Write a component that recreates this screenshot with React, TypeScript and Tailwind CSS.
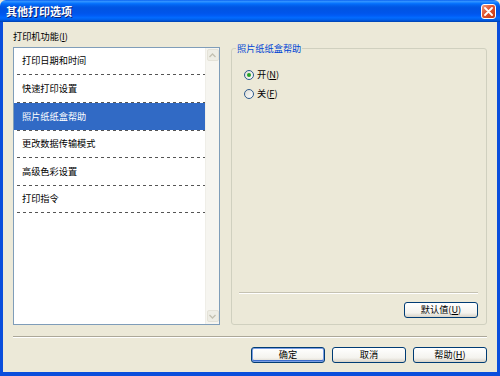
import React from 'react';

const items = [
  { label: '打印日期和时间', h: 'h-[26px]' },
  { label: '快速打印设置', h: 'h-[27px]' },
  { label: '照片纸纸盒帮助', h: 'h-[27px]', selected: true },
  { label: '更改数据传输模式', h: 'h-[26px]' },
  { label: '高级色彩设置', h: 'h-[27px]' },
  { label: '打印指令', h: 'h-[26px]' },
];

function XpButton({ children, primary = false }: { children: React.ReactNode; primary?: boolean }) {
  return (
    <button
      className={`w-[74px] h-[16px] rounded-[3px] border border-[#003C74] bg-[linear-gradient(180deg,#FFFFFF_0%,#F4F3EE_70%,#D8D3C8_100%)] text-[9.2px] leading-none text-black flex items-center justify-center ${
        primary ? 'shadow-[inset_0_0_0_1px_#7B9EE3,inset_0_-1px_0_1px_#3D6DCC]' : ''
      }`}
    >
      {children}
    </button>
  );
}

function Radio({ checked, children }: { checked?: boolean; children: React.ReactNode }) {
  return (
    <div className="flex items-center h-[13px] gap-[3px]">
      <div className="w-[10px] h-[10px] rounded-full border border-[#2C5A8E] bg-[linear-gradient(135deg,#DCDBD3,#FFFFFF)] flex items-center justify-center">
        {checked && <div className="w-[4px] h-[4px] rounded-full bg-[#25A325]" />}
      </div>
      <span className="text-[9.2px] leading-none">{children}</span>
    </div>
  );
}

function ScrollArrow({ up }: { up?: boolean }) {
  return (
    <div className="w-[12px] h-[12px] rounded-[2px] border border-[#E4E2D8] bg-[#EEEDE5] flex items-center justify-center">
      <svg width="7" height="5" viewBox="0 0 7 5">
        <path
          d={up ? 'M0.5 4 L3.5 1 L6.5 4' : 'M0.5 1 L3.5 4 L6.5 1'}
          fill="none"
          stroke="#C4C1B2"
          strokeWidth="1.4"
        />
      </svg>
    </div>
  );
}

export default function App() {
  return (
    <div className="w-[500px] h-[376px] flex flex-col bg-[#ECE9D8] font-['Noto_Sans_CJK_SC',sans-serif] text-black select-none overflow-hidden">
      {/* title bar */}
      <div className="h-[22px] shrink-0 rounded-t-[6px] flex items-center pl-[6px] pr-[4px] bg-[linear-gradient(180deg,#0058EE_0%,#3593FF_5%,#288EFF_9%,#127DFF_13%,#036FFC_17%,#0262EE_24%,#0057E5_32%,#0054E3_40%,#0055EB_60%,#005BF5_70%,#026AFE_80%,#0062EF_88%,#0052D6_94%,#0040AB_100%)]">
        <span className="flex-1 text-[11px] font-bold leading-none text-white [text-shadow:1px_1px_0_#0A1E6E]">
          其他打印选项
        </span>
        <div className="w-[15px] h-[15px] rounded-[3px] border border-white bg-[linear-gradient(135deg,#F09C80,#E0532F_45%,#C23A16)] flex items-center justify-center">
          <svg width="9" height="9" viewBox="0 0 9 9">
            <path d="M1 1 L8 8 M8 1 L1 8" stroke="white" strokeWidth="1.8" strokeLinecap="round" />
          </svg>
        </div>
      </div>

      {/* body */}
      <div className="flex-1 flex flex-col border-x-[3px] border-b-[4px] border-[#0A4EDC] px-[10px] pt-[8px]">
        <div className="text-[9.2px] leading-[12px]">
          打印机功能(<u>I</u>)
        </div>

        <div className="mt-[5px] flex items-start gap-[11px]">
          {/* list box */}
          <div className="w-[207px] h-[278px] border border-[#7F9DB9] bg-white flex">
            <div className="flex-1 flex flex-col">
              {items.map((it) => (
                <React.Fragment key={it.label}>
                  <div
                    className={`${it.h} flex items-center pl-[8px] text-[9.2px] leading-none ${
                      it.selected ? 'bg-[#316AC5] text-white' : 'text-black'
                    }`}
                  >
                    {it.label}
                  </div>
                  <div className="h-[1px] ml-[3px] bg-[linear-gradient(90deg,#555555_50%,transparent_50%)] bg-[length:6px_1px]" />
                </React.Fragment>
              ))}
            </div>
            <div className="w-[14px] border-l border-[#EFEEE8] bg-[#F6F5F0] flex flex-col justify-between items-center pt-[1px] pb-[2px]">
              <ScrollArrow up />
              <ScrollArrow />
            </div>
          </div>

          {/* group box */}
          <div className="relative mt-[1px] w-[256px] h-[277px] rounded-[3px] border border-[#D0D0BF] flex flex-col pt-[19px] pl-[12px] pb-[6px]">
            <span className="absolute top-[-7px] left-[4px] px-[1px] bg-[#ECE9D8] text-[9.2px] leading-[12px] text-[#0046D5]">
              照片纸纸盒帮助
            </span>
            <div className="flex flex-col gap-[6px]">
              <Radio checked>
                开(<u>N</u>)
              </Radio>
              <Radio>
                关(<u>F</u>)
              </Radio>
            </div>
            <div className="flex-1" />
            <div className="ml-[-5px] mr-[8px] border-t border-[#C5C2B2] border-b border-b-white" />
            <div className="mt-[8px] mr-[8px] flex justify-end">
              <XpButton>
                默认值(<u>U</u>)
              </XpButton>
            </div>
          </div>
        </div>

        <div className="mt-[11px] border-t border-[#ACA899] border-b border-b-white" />

        <div className="mt-[9px] flex justify-end gap-[7px]">
          <XpButton primary>确定</XpButton>
          <XpButton>取消</XpButton>
          <XpButton>
            帮助(<u>H</u>)
          </XpButton>
        </div>
      </div>
    </div>
  );
}
